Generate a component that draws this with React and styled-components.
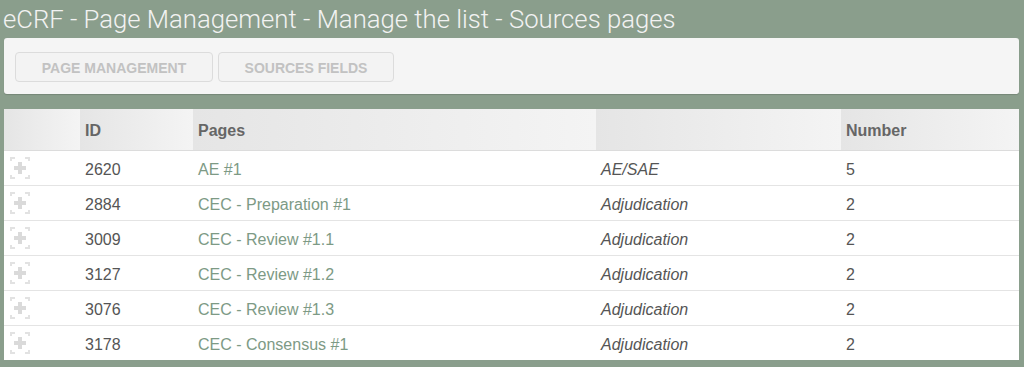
import React from "react";
import styled, { createGlobalStyle } from "styled-components";

const GlobalStyle = createGlobalStyle`
  html, body {
    margin: 0;
    padding: 0;
    background: #8a9e8c;
  }
  body {
    font-family: "Liberation Sans", Arial, sans-serif;
  }
`;

const Page = styled.div`
  width: 1024px;
  height: 367px;
  overflow: hidden;
  background: #8a9e8c;
  padding: 0 5px 0 4px;
  box-sizing: border-box;
`;

const Title = styled.h1`
  margin: 0 0 0 -1px;
  padding: 4px 0 0 0;
  height: 38px;
  box-sizing: border-box;
  font-family: Roboto, "Liberation Sans", sans-serif;
  font-weight: 300;
  font-size: 25.7px;
  line-height: 30px;
  color: #f2f2f2;
  white-space: nowrap;
`;

const Toolbar = styled.div`
  display: flex;
  gap: 5px;
  height: 56px;
  box-sizing: border-box;
  padding: 14px 11px;
  background: #f5f5f5;
  border-radius: 3px;
  box-shadow: 0 1px 1px rgba(0, 0, 0, 0.15);
`;

const ToolButton = styled.button`
  height: 30px;
  width: ${(p) => p.w}px;
  box-sizing: border-box;
  border: 1px solid #dcdcdc;
  border-radius: 4px;
  background: #f3f3f3;
  font-family: "Liberation Sans", Arial, sans-serif;
  font-weight: bold;
  font-size: 14px;
  color: #c2c2c2;
  text-transform: uppercase;
  padding: 1px 0 0;
`;

const Table = styled.table`
  margin-top: 15px;
  width: 1015px;
  border-collapse: collapse;
  background: #fff;
  font-size: 16px;
  color: #555;
  table-layout: fixed;
`;

const HeadCell = styled.th`
  height: 41px;
  box-sizing: border-box;
  padding: 4px 0 0 5px;
  text-align: left;
  font-weight: bold;
  color: #666;
  background: linear-gradient(to right, #e5e5e5, #f4f4f4);
  border-bottom: 1px solid #dcdcdc;
`;

const Row = styled.tr`
  height: 35px;
  border-bottom: 1px solid #e4e4e4;
  &:last-child {
    border-bottom: none;
  }
`;

const Cell = styled.td`
  padding: 4px 0 0 5px;
  font-style: ${(p) => (p.italic ? "italic" : "normal")};
  color: ${(p) => (p.link ? "#7d9a85" : "#555")};
  white-space: nowrap;
`;

const IconCell = styled.td`
  padding: 1px 0 0 6px;
  line-height: 0;
`;

const ExpandIcon = () => (
  <svg width="20" height="22" viewBox="0 0 20 22">
    <g fill="none" stroke="#e2e2e2" strokeWidth="2">
      <path d="M1 4 V1 H5" />
      <path d="M15 1 H19 V4" />
      <path d="M1 18 V21 H5" />
      <path d="M15 21 H19 V18" />
    </g>
    <g fill="#dadada">
      <rect x="8" y="5" width="4" height="12" />
      <rect x="4" y="9" width="12" height="4" />
    </g>
  </svg>
);

const rows = [
  { id: 2620, page: "AE #1", type: "AE/SAE", number: 5 },
  { id: 2884, page: "CEC - Preparation #1", type: "Adjudication", number: 2 },
  { id: 3009, page: "CEC - Review #1.1", type: "Adjudication", number: 2 },
  { id: 3127, page: "CEC - Review #1.2", type: "Adjudication", number: 2 },
  { id: 3076, page: "CEC - Review #1.3", type: "Adjudication", number: 2 },
  { id: 3178, page: "CEC - Consensus #1", type: "Adjudication", number: 2 },
];

export default function App() {
  return (
    <Page>
      <GlobalStyle />
      <Title>eCRF - Page Management - Manage the list - Sources pages</Title>
      <Toolbar>
        <ToolButton w={198}>Page Management</ToolButton>
        <ToolButton w={176}>Sources fields</ToolButton>
      </Toolbar>
      <Table>
        <colgroup>
          <col style={{ width: 76 }} />
          <col style={{ width: 113 }} />
          <col style={{ width: 403 }} />
          <col style={{ width: 245 }} />
          <col />
        </colgroup>
        <thead>
          <tr>
            <HeadCell />
            <HeadCell>ID</HeadCell>
            <HeadCell>Pages</HeadCell>
            <HeadCell />
            <HeadCell>Number</HeadCell>
          </tr>
        </thead>
        <tbody>
          {rows.map((r) => (
            <Row key={r.id}>
              <IconCell>
                <ExpandIcon />
              </IconCell>
              <Cell>{r.id}</Cell>
              <Cell link>{r.page}</Cell>
              <Cell italic>{r.type}</Cell>
              <Cell>{r.number}</Cell>
            </Row>
          ))}
        </tbody>
      </Table>
    </Page>
  );
}
